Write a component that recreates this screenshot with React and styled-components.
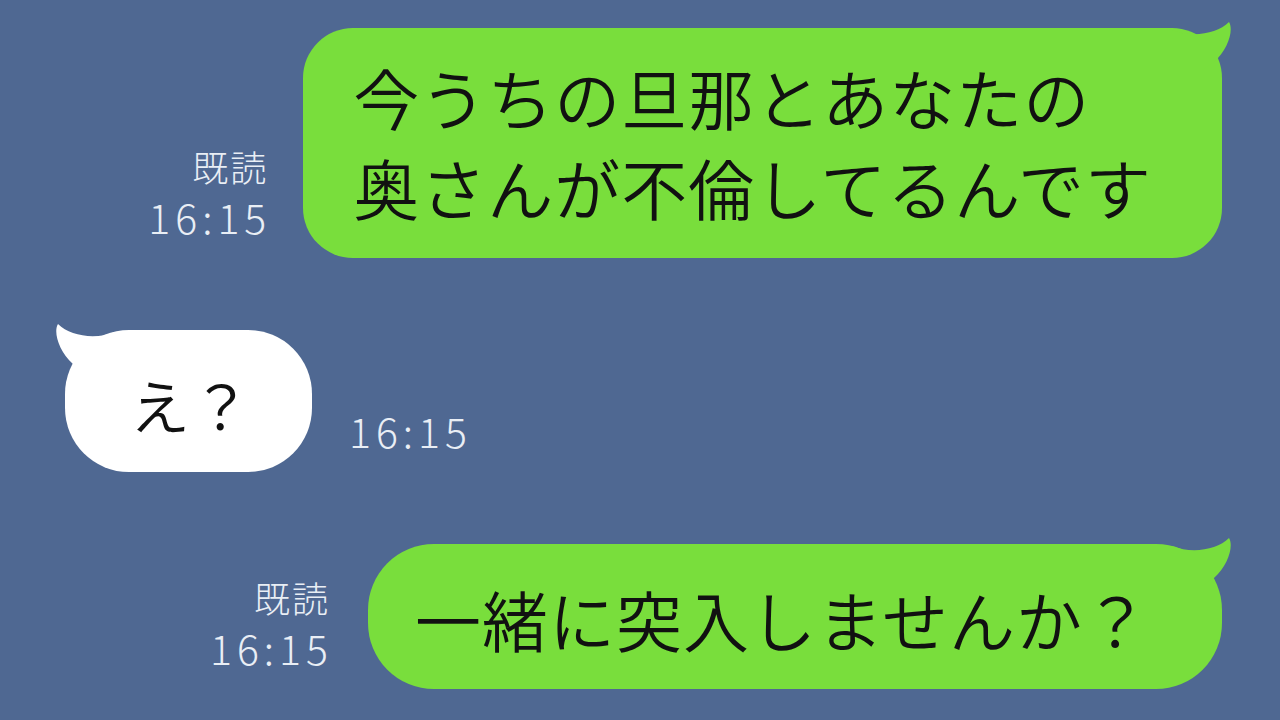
import styled, { createGlobalStyle } from 'styled-components';

const GlobalStyle = createGlobalStyle`
  html, body {
    margin: 0;
    padding: 0;
    background: #4f6892;
  }
`;

const colors = {
  bg: '#4f6892',
  green: '#79de3c',
  white: '#ffffff',
  meta: '#e9eef5',
  text: '#111111',
};

const Page = styled.div`
  width: 1280px;
  height: 720px;
  background: ${colors.bg};
  box-sizing: border-box;
  padding: 28px 58px 0 65px;
  display: flex;
  flex-direction: column;
  gap: 72px;
  overflow: hidden;
  font-family: 'Noto Sans CJK JP', 'Noto Sans', sans-serif;
`;

const Row = styled.div`
  display: flex;
  align-items: flex-end;
  justify-content: ${(p) => (p.$mine ? 'flex-end' : 'flex-start')};
  gap: ${(p) => p.$gap}px;
`;

const Bubble = styled.div`
  position: relative;
  background: ${(p) => (p.$mine ? colors.green : colors.white)};
  color: ${colors.text};
  border-radius: ${(p) => p.$radius}px;
  padding: ${(p) => p.$pad};
  font-size: ${(p) => p.$size}px;
  line-height: ${(p) => p.$lh}px;
  font-weight: 350;
  letter-spacing: 1px;
  white-space: nowrap;
`;

const Tail = styled.svg`
  position: absolute;
  top: -8px;
  width: 60px;
  height: 50px;
  ${(p) => (p.$mine ? 'right: -10px;' : 'left: -10px; transform: scaleX(-1);')}
`;

const Meta = styled.div`
  display: flex;
  flex-direction: column;
  align-items: ${(p) => (p.$mine ? 'flex-end' : 'flex-start')};
  gap: 6px;
  color: ${colors.meta};
  margin-bottom: 20px;
`;

const ReadMark = styled.div`
  font-size: 36px;
  line-height: 44px;
  font-weight: 300;
  letter-spacing: 2px;
  margin-right: -2px;
`;

const Time = styled.div`
  font-size: 41px;
  line-height: 44px;
  letter-spacing: 5px;
  font-weight: 300;
  margin-right: -5px;
`;

function BubbleTail({ mine }) {
  return (
    <Tail $mine={mine} viewBox="0 0 60 50">
      <path
        d="M0 10 C20 18 45 14 57 2 C62 10 56 30 42 42 L30 50 L0 50 Z"
        fill={mine ? colors.green : colors.white}
      />
    </Tail>
  );
}

function MetaInfo({ mine, read }) {
  return (
    <Meta $mine={mine}>
      {read && <ReadMark>既読</ReadMark>}
      <Time>16:15</Time>
    </Meta>
  );
}

export default function App() {
  return (
    <>
      <GlobalStyle />
      <Page>
        <Row $mine $gap={37}>
          <MetaInfo mine read />
          <Bubble $mine $radius={50} $size={66} $lh={90} $pad="23px 70px 27px 50px">
            <BubbleTail mine />
            今うちの旦那とあなたの
            <br />
            奥さんが不倫してるんです
          </Bubble>
        </Row>
        <Row $gap={37}>
          <Bubble $radius={64} $size={60} $lh={80} $pad="34px 60px 28px 65px">
            <BubbleTail />
            え？
          </Bubble>
          <MetaInfo />
        </Row>
        <Row $mine $gap={40}>
          <MetaInfo mine read />
          <Bubble $mine $radius={66} $size={66} $lh={80} $pad="34px 72px 31px 47px">
            <BubbleTail mine />
            一緒に突入しませんか？
          </Bubble>
        </Row>
      </Page>
    </>
  );
}
